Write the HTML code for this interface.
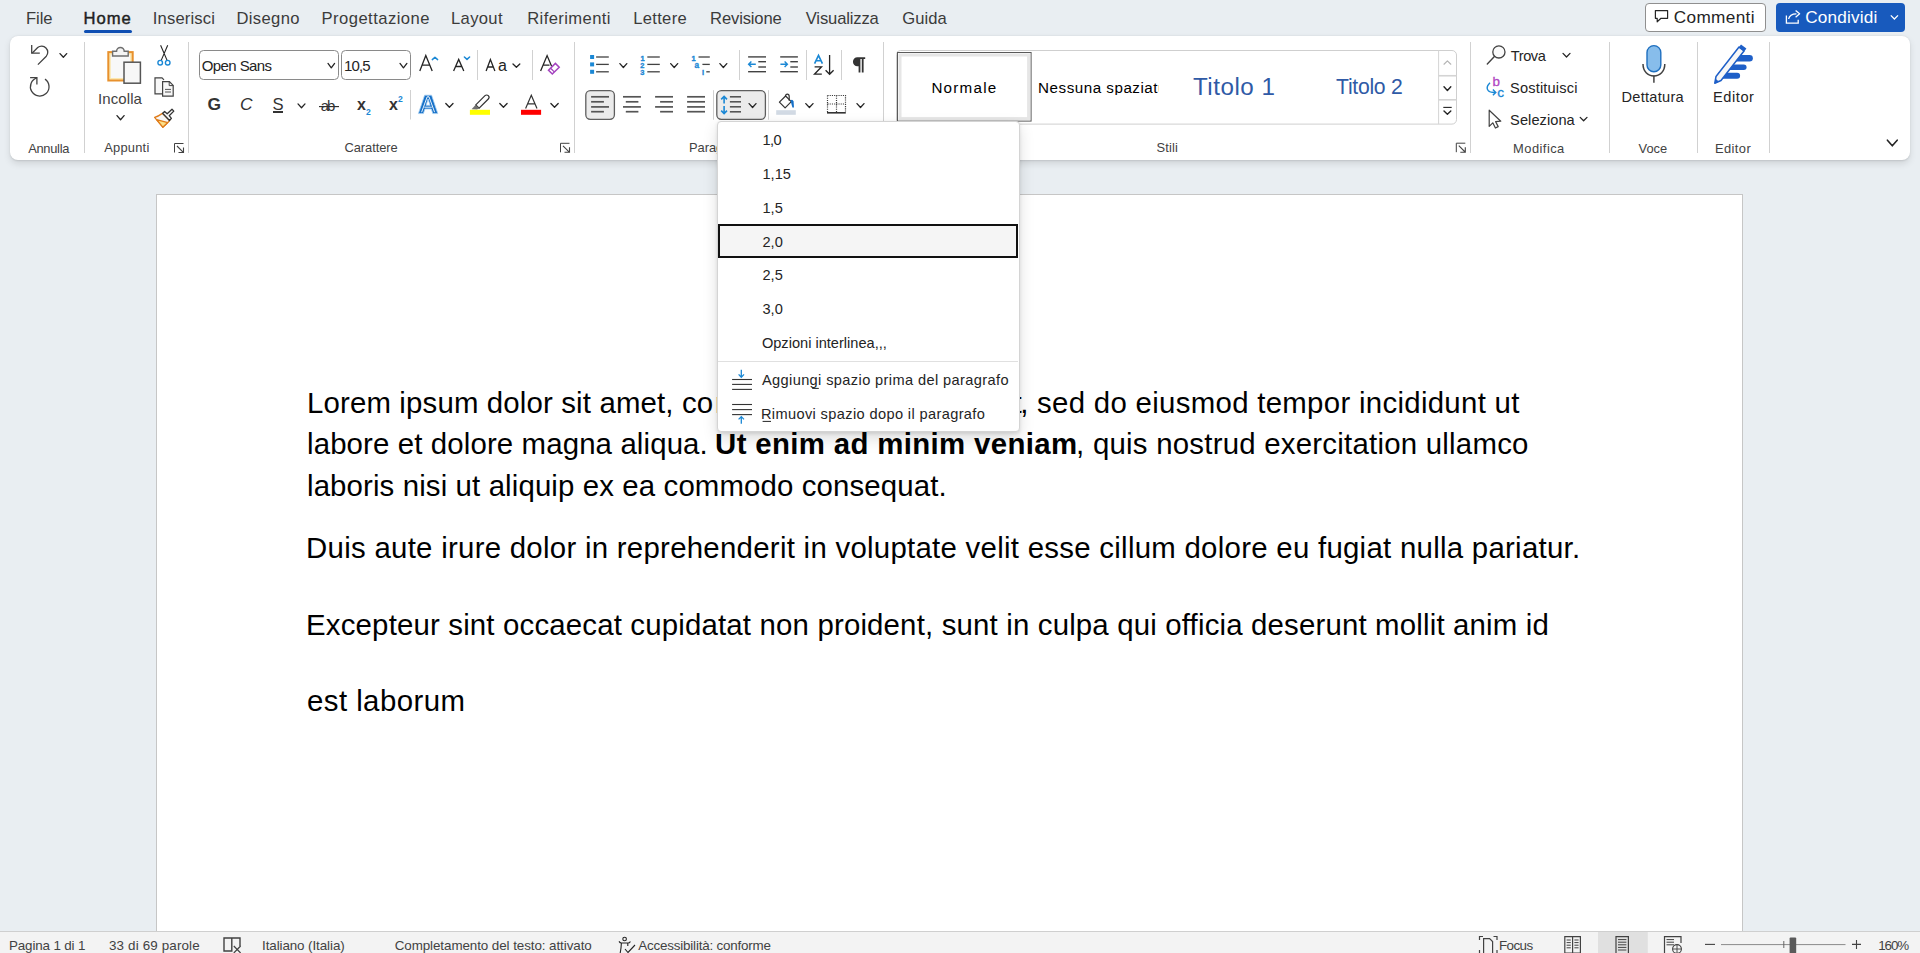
<!DOCTYPE html>
<html><head><meta charset="utf-8"><title>Word</title>
<style>
html,body{margin:0;padding:0;}
body{width:1920px;height:953px;overflow:hidden;position:relative;background:#e9eef2;font-family:"Liberation Sans",sans-serif;}
.t{position:absolute;white-space:nowrap;line-height:1;}
.r{position:absolute;box-sizing:border-box;}
svg{position:absolute;overflow:visible;}
</style></head><body>
<div class="t" id="t0" style="left:26.00px;top:10.85px;font-size:16.6px;color:#3b3b3b;letter-spacing:-0.086px;">File</div>
<div class="t" id="t1" style="left:83.50px;top:10.85px;font-size:16.6px;color:#1f1f1f;letter-spacing:0.988px;-webkit-text-stroke:0.45px #1f1f1f;">Home</div>
<div class="t" id="t2" style="left:152.75px;top:10.85px;font-size:16.6px;color:#3b3b3b;letter-spacing:0.166px;">Inserisci</div>
<div class="t" id="t3" style="left:236.50px;top:10.85px;font-size:16.6px;color:#3b3b3b;letter-spacing:0.350px;">Disegno</div>
<div class="t" id="t4" style="left:321.50px;top:10.85px;font-size:16.6px;color:#3b3b3b;letter-spacing:0.465px;">Progettazione</div>
<div class="t" id="t5" style="left:451.00px;top:10.85px;font-size:16.6px;color:#3b3b3b;letter-spacing:0.338px;">Layout</div>
<div class="t" id="t6" style="left:527.20px;top:10.85px;font-size:16.6px;color:#3b3b3b;letter-spacing:0.399px;">Riferimenti</div>
<div class="t" id="t7" style="left:633.20px;top:10.85px;font-size:16.6px;color:#3b3b3b;letter-spacing:0.311px;">Lettere</div>
<div class="t" id="t8" style="left:710.10px;top:10.85px;font-size:16.6px;color:#3b3b3b;letter-spacing:-0.155px;">Revisione</div>
<div class="t" id="t9" style="left:805.75px;top:10.85px;font-size:16.6px;color:#3b3b3b;letter-spacing:-0.147px;">Visualizza</div>
<div class="t" id="t10" style="left:902.20px;top:10.85px;font-size:16.6px;color:#3b3b3b;letter-spacing:0.087px;">Guida</div>
<div class="r" style="left:84px;top:30px;width:48px;height:3px;background:#0f4fb3;border-radius:2px;"></div>
<div class="r" style="left:1644.5px;top:2.5px;width:121.0px;height:29.0px;background:#fff;border:1px solid #8f8f8f;border-radius:4px;"></div>
<div class="t" id="t11" style="left:1673.80px;top:9.44px;font-size:17.2px;color:#242424;letter-spacing:0.343px;">Commenti</div>
<div class="r" style="left:1776px;top:2.5px;width:129px;height:29.0px;background:#185abd;border-radius:4px;"></div>
<div class="t" id="t12" style="left:1805.20px;top:9.44px;font-size:17.2px;color:#ffffff;letter-spacing:0.178px;">Condividi</div>
<div class="r" style="left:10px;top:36px;width:1900px;height:124px;background:#fff;border-radius:8px;box-shadow:0 3.2px 7.2px rgba(0,0,0,0.10),0 0.6px 1.8px rgba(0,0,0,0.10);"></div>
<svg style="left:0px;top:0px;" width="1920" height="953" viewBox="0 0 1920 953"><line x1="84.5" y1="42" x2="84.5" y2="153" stroke="#d1d1d1" stroke-width="1"/><line x1="188.5" y1="42" x2="188.5" y2="153" stroke="#d1d1d1" stroke-width="1"/><line x1="574.5" y1="42" x2="574.5" y2="153" stroke="#d1d1d1" stroke-width="1"/><line x1="883.5" y1="42" x2="883.5" y2="153" stroke="#d1d1d1" stroke-width="1"/><line x1="1470.5" y1="42" x2="1470.5" y2="153" stroke="#d1d1d1" stroke-width="1"/><line x1="1609.5" y1="42" x2="1609.5" y2="153" stroke="#d1d1d1" stroke-width="1"/><line x1="1697.5" y1="42" x2="1697.5" y2="153" stroke="#d1d1d1" stroke-width="1"/><line x1="1769.5" y1="42" x2="1769.5" y2="153" stroke="#d1d1d1" stroke-width="1"/></svg>
<div class="t" id="t13" style="left:28.20px;top:143.08px;font-size:12.9px;color:#424242;letter-spacing:-0.306px;">Annulla</div>
<div class="t" id="t14" style="left:104.20px;top:142.08px;font-size:12.9px;color:#424242;letter-spacing:0.224px;">Appunti</div>
<div class="t" id="t15" style="left:344.40px;top:142.08px;font-size:12.9px;color:#424242;letter-spacing:-0.046px;">Carattere</div>
<div class="t" id="t16" style="left:688.90px;top:142.08px;font-size:12.9px;color:#424242;">Paragrafo</div>
<div class="t" id="t17" style="left:1156.40px;top:142.08px;font-size:12.9px;color:#424242;letter-spacing:0.173px;">Stili</div>
<div class="t" id="t18" style="left:1513.10px;top:143.08px;font-size:12.9px;color:#424242;letter-spacing:0.453px;">Modifica</div>
<div class="t" id="t19" style="left:1638.60px;top:143.08px;font-size:12.9px;color:#424242;letter-spacing:-0.067px;">Voce</div>
<div class="t" id="t20" style="left:1714.90px;top:143.08px;font-size:12.9px;color:#424242;letter-spacing:0.424px;">Editor</div>
<svg style="left:0px;top:0px;" width="1920" height="953" viewBox="0 0 1920 953"><path d="M37.9,64.6 L46.3,56.2 A6.1,6.1 0 0 0 37.7,47.6 L32.3,53" fill="none" stroke="#424242" stroke-width="1.3"/><path d="M31.7,45 V53.2 H39.8" fill="none" stroke="#424242" stroke-width="1.3"/><polyline points="60,53.6 63.35,57.3 66.7,53.6" fill="none" stroke="#242424" stroke-width="1.3" stroke-linecap="round" stroke-linejoin="round"/><path d="M36.9,77.9 A9.3,9.3 0 1 0 45.0,79.1" fill="none" stroke="#424242" stroke-width="1.3"/><path d="M30.1,77.6 H36.9 V84.4" fill="none" stroke="#424242" stroke-width="1.3"/><rect x="108.3" y="52.1" width="24.4" height="28.4" fill="#fbe7b0" stroke="#e8912d" stroke-width="2"/><rect x="110.8" y="54.6" width="19.4" height="23.4" fill="#f8f8f8"/><path d="M112.6,56 V51.3 H116.6 A3.8,3.8 0 0 1 124.2,51.3 H128.2 V56 Z" fill="#f4f4f4" stroke="#6e6e6e" stroke-width="1.4"/><rect x="124.0" y="62.2" width="16.4" height="21" fill="#f7f7f7" stroke="#555" stroke-width="1.5"/><polyline points="117,115.6 120.55,119.7 124.1,115.6" fill="none" stroke="#242424" stroke-width="1.3" stroke-linecap="round" stroke-linejoin="round"/><path d="M160.6,45.2 L167.1,60.4 M167.7,45.2 L161.2,60.4" stroke="#242424" stroke-width="1.1" fill="none"/><circle cx="160.2" cy="62.7" r="2.3" fill="#fff" stroke="#1b88d5" stroke-width="1.4"/><circle cx="167.7" cy="62.7" r="2.3" fill="#fff" stroke="#1b88d5" stroke-width="1.4"/><path d="M163,93.8 H155 V77.8 H162 L164,79.8" fill="#f7f7f7" stroke="#424242" stroke-width="1.2"/><path d="M162.6,81.6 H169.4 L173.2,85.4 V96.2 H162.6 Z" fill="#f7f7f7" stroke="#424242" stroke-width="1.2"/><path d="M169.2,81.6 V85.6 H173.2" fill="none" stroke="#424242" stroke-width="1"/><path d="M165,89.4 H171 M165,92 H171" stroke="#424242" stroke-width="0.9"/><path d="M162.4,113.4 Q158,116.6 154.6,117.3 L162.8,127.2 Q166.6,124 169.6,120.6 Z" fill="#f7f7f7" stroke="#e07c1a" stroke-width="1.3" stroke-linejoin="round"/><path d="M156.6,119.6 L167.8,122.6 L162.8,127.2 Z" fill="#fbe08a" stroke="#e07c1a" stroke-width="1.3" stroke-linejoin="round"/><path d="M162.6,113.2 L164.6,111.5 L167.2,113.8 L172,109.3 L173.8,111.1 L169.2,115.7 L171.4,118.3 L169.5,120.5 Z" fill="#f7f7f7" stroke="#333" stroke-width="1.3" stroke-linejoin="round"/><rect x="199.5" y="50.5" width="139" height="29" rx="4" fill="#fff" stroke="#8a8a8a" stroke-width="1"/><rect x="341.5" y="50.5" width="69" height="29" rx="4" fill="#fff" stroke="#8a8a8a" stroke-width="1"/><polyline points="328,63.4 331.3,67.8 334.6,63.4" fill="none" stroke="#242424" stroke-width="1.3" stroke-linecap="round" stroke-linejoin="round"/><polyline points="400,63.4 403.45,67.8 406.9,63.4" fill="none" stroke="#242424" stroke-width="1.3" stroke-linecap="round" stroke-linejoin="round"/><path d="M419.8,71 L425.8,55.6 L432.2,71 M422.1,65.1 H429.6" fill="none" stroke="#242424" stroke-width="1.3"/><polyline points="432.3,59.6 434.95000000000005,57.2 437.6,59.6" fill="none" stroke="#1b88d5" stroke-width="1.5" stroke-linecap="round" stroke-linejoin="round"/><path d="M453.6,71 L458.7,59.4 L463.8,71 M455.5,66.5 H462" fill="none" stroke="#242424" stroke-width="1.3"/><polyline points="464.4,57 467.0,59.4 469.6,57" fill="none" stroke="#1b88d5" stroke-width="1.5" stroke-linecap="round" stroke-linejoin="round"/><line x1="477.5" y1="50" x2="477.5" y2="80" stroke="#d1d1d1" stroke-width="1" stroke-linecap="butt"/><path d="M486.1,71 L490.4,59.5 L494.9,71 M487.6,67 H493.3" fill="none" stroke="#242424" stroke-width="1.3"/><polyline points="513,64 516.4,67.3 519.8,64" fill="none" stroke="#242424" stroke-width="1.3" stroke-linecap="round" stroke-linejoin="round"/><line x1="532.5" y1="50" x2="532.5" y2="80" stroke="#d1d1d1" stroke-width="1" stroke-linecap="butt"/><path d="M540.6,71 L547.1,55.6 L551.6,66.2 M543,65.2 H549.5" fill="none" stroke="#242424" stroke-width="1.3"/><path d="M548.5,70.2 L555.4,63.4 L559.2,67.2 L552.3,74 Z" fill="#fff" stroke="#a443bf" stroke-width="1.5" stroke-linejoin="miter"/><path d="M550.6,68.2 L554.3,71.9" stroke="#a443bf" stroke-width="1.3"/><polyline points="298,103.9 301.5,107.7 305,103.9" fill="none" stroke="#242424" stroke-width="1.3" stroke-linecap="round" stroke-linejoin="round"/><line x1="319" y1="106.6" x2="339" y2="106.6" stroke="#242424" stroke-width="1.1" stroke-linecap="butt"/><line x1="410.5" y1="90" x2="410.5" y2="119.5" stroke="#d1d1d1" stroke-width="1" stroke-linecap="butt"/><path d="M418.4,113.6 L424.6,95.2 L431.6,95.2 L437.8,113.6 L432.8,113.6 L431.3,109 L424.9,109 L423.4,113.6 Z M426.1,105.3 L430.1,105.3 L428.1,99 Z" fill="#1570c8" fill-rule="evenodd" stroke="#a9d0f2" stroke-width="0.8" stroke-linejoin="round"/><path d="M421.6,112.2 L427.2,96.8 L429.0,96.8 L434.6,112.2 M424.4,107.2 H431.8" fill="none" stroke="#fff" stroke-width="0.9"/><polyline points="445.8,103.5 449.4,107.3 453,103.5" fill="none" stroke="#242424" stroke-width="1.3" stroke-linecap="round" stroke-linejoin="round"/><path d="M475.8,104.9 L485.0,95.7 A2.3,2.3 0 0 1 488.3,99 L479.1,108.2 Z" fill="#fff" stroke="#333" stroke-width="1.2"/><path d="M475.6,104.7 L479.3,108.4 L476.9,109.4 L471.6,109.2 Z" fill="#707070"/><rect x="469.9" y="109.8" width="20.1" height="5" fill="#ffff00"/><polyline points="499.8,103.5 503.45000000000005,107.3 507.1,103.5" fill="none" stroke="#242424" stroke-width="1.3" stroke-linecap="round" stroke-linejoin="round"/><path d="M525.6,108.6 L531.3,95.3 L537,108.6 M527.6,103.8 H535" fill="none" stroke="#333" stroke-width="1.2"/><rect x="521" y="109.8" width="20.1" height="5" fill="#ff0000"/><polyline points="550.9,103.5 554.55,107.3 558.2,103.5" fill="none" stroke="#242424" stroke-width="1.3" stroke-linecap="round" stroke-linejoin="round"/><rect x="590.1" y="55" width="4" height="4" fill="#1b88d5"/><line x1="596.1" y1="57" x2="608.8" y2="57" stroke="#424242" stroke-width="1.3" stroke-linecap="butt"/><line x1="647.3" y1="57" x2="659.8" y2="57" stroke="#424242" stroke-width="1.3" stroke-linecap="butt"/><rect x="590.1" y="62.400000000000006" width="4" height="4" fill="#1b88d5"/><line x1="596.1" y1="64.4" x2="608.8" y2="64.4" stroke="#424242" stroke-width="1.3" stroke-linecap="butt"/><line x1="647.3" y1="64.4" x2="659.8" y2="64.4" stroke="#424242" stroke-width="1.3" stroke-linecap="butt"/><rect x="590.1" y="69.8" width="4" height="4" fill="#1b88d5"/><line x1="596.1" y1="71.8" x2="608.8" y2="71.8" stroke="#424242" stroke-width="1.3" stroke-linecap="butt"/><line x1="647.3" y1="71.8" x2="659.8" y2="71.8" stroke="#424242" stroke-width="1.3" stroke-linecap="butt"/><polyline points="619.9,63.6 623.3499999999999,67.5 626.8,63.6" fill="none" stroke="#242424" stroke-width="1.3" stroke-linecap="round" stroke-linejoin="round"/><polyline points="670.7,63.6 674.2,67.5 677.7,63.6" fill="none" stroke="#242424" stroke-width="1.3" stroke-linecap="round" stroke-linejoin="round"/><polyline points="719.9,63.6 723.3499999999999,67.5 726.8,63.6" fill="none" stroke="#242424" stroke-width="1.3" stroke-linecap="round" stroke-linejoin="round"/><text x="640.4" y="60.6" font-size="7.4" font-weight="700" fill="#1b88d5" stroke="#1b88d5" stroke-width="0.35" font-family="Liberation Sans">1</text><text x="640.2" y="67.9" font-size="7.4" font-weight="700" fill="#1b88d5" stroke="#1b88d5" stroke-width="0.35" font-family="Liberation Sans">2</text><text x="640.2" y="75.2" font-size="7.4" font-weight="700" fill="#1b88d5" stroke="#1b88d5" stroke-width="0.35" font-family="Liberation Sans">3</text><text x="691.6" y="60.6" font-size="7.4" font-weight="700" fill="#1b88d5" stroke="#1b88d5" stroke-width="0.35" font-family="Liberation Sans">1</text><text x="694.4" y="67.9" font-size="8.2" font-weight="700" fill="#1b88d5" stroke="#1b88d5" stroke-width="0.35" font-family="Liberation Sans">a</text><text x="701.9" y="75.2" font-size="7.4" font-weight="700" fill="#1b88d5" stroke="#1b88d5" stroke-width="0.35" font-family="Liberation Sans">i</text><line x1="698.5" y1="57" x2="709.8" y2="57" stroke="#424242" stroke-width="1.3" stroke-linecap="butt"/><line x1="702.4" y1="64.4" x2="709.8" y2="64.4" stroke="#424242" stroke-width="1.3" stroke-linecap="butt"/><line x1="706.3" y1="71.8" x2="709.8" y2="71.8" stroke="#424242" stroke-width="1.3" stroke-linecap="butt"/><line x1="739.5" y1="50" x2="739.5" y2="80" stroke="#d1d1d1" stroke-width="1" stroke-linecap="butt"/><line x1="748.1" y1="56.9" x2="766" y2="56.9" stroke="#424242" stroke-width="1.4" stroke-linecap="butt"/><line x1="758.3" y1="61.7" x2="766" y2="61.7" stroke="#424242" stroke-width="1.4" stroke-linecap="butt"/><line x1="758.3" y1="67" x2="766" y2="67" stroke="#424242" stroke-width="1.4" stroke-linecap="butt"/><line x1="748.1" y1="71.7" x2="766" y2="71.7" stroke="#424242" stroke-width="1.4" stroke-linecap="butt"/><line x1="780.2" y1="56.9" x2="797.9" y2="56.9" stroke="#424242" stroke-width="1.4" stroke-linecap="butt"/><line x1="790.3" y1="61.7" x2="797.9" y2="61.7" stroke="#424242" stroke-width="1.4" stroke-linecap="butt"/><line x1="790.3" y1="67" x2="797.9" y2="67" stroke="#424242" stroke-width="1.4" stroke-linecap="butt"/><line x1="780.2" y1="71.7" x2="797.9" y2="71.7" stroke="#424242" stroke-width="1.4" stroke-linecap="butt"/><path d="M755.8,64.2 H748.8 M751.4,61.4 L748.6,64.2 L751.4,67" fill="none" stroke="#1b88d5" stroke-width="1.4"/><path d="M780.4,64.2 H787.2 M784.6,61.4 L787.4,64.2 L784.6,67" fill="none" stroke="#1b88d5" stroke-width="1.4"/><line x1="806.5" y1="50" x2="806.5" y2="80" stroke="#d1d1d1" stroke-width="1" stroke-linecap="butt"/><path d="M814.6,63.7 L818.5,55.3 L822.4,63.7 M816,60.7 H821" fill="none" stroke="#1b88d5" stroke-width="1.6"/><path d="M814.6,66.9 H821.4 L814.6,74.1 H821.8" fill="none" stroke="#242424" stroke-width="1.4"/><path d="M829.6,55.1 V74.3 M825.6,70.2 L829.6,74.3 L833.6,70.2" fill="none" stroke="#242424" stroke-width="1.3"/><line x1="841.5" y1="50" x2="841.5" y2="80" stroke="#d1d1d1" stroke-width="1" stroke-linecap="butt"/><path d="M865.2,57.3 V59 H863.6 V72.4 H861.8 V59 H860.4 V72.4 H858.6 V66.2 H857.4 A4.45,4.45 0 0 1 857.4,57.3 Z" fill="#333"/><rect x="585.8" y="90.7" width="28.6" height="28.6" rx="4.5" fill="#ebebeb" stroke="#5e5e5e" stroke-width="1.3"/><line x1="591.1" y1="96.8" x2="609" y2="96.8" stroke="#555" stroke-width="1.7" stroke-linecap="butt"/><line x1="623" y1="96.8" x2="640.9" y2="96.8" stroke="#555" stroke-width="1.7" stroke-linecap="butt"/><line x1="655.1" y1="96.8" x2="673" y2="96.8" stroke="#555" stroke-width="1.7" stroke-linecap="butt"/><line x1="687.1" y1="96.8" x2="705" y2="96.8" stroke="#555" stroke-width="1.7" stroke-linecap="butt"/><line x1="591.1" y1="101.8" x2="603.9" y2="101.8" stroke="#555" stroke-width="1.7" stroke-linecap="butt"/><line x1="625.8" y1="101.8" x2="638.4" y2="101.8" stroke="#555" stroke-width="1.7" stroke-linecap="butt"/><line x1="660.1" y1="101.8" x2="673" y2="101.8" stroke="#555" stroke-width="1.7" stroke-linecap="butt"/><line x1="687.1" y1="101.8" x2="705" y2="101.8" stroke="#555" stroke-width="1.7" stroke-linecap="butt"/><line x1="591.1" y1="106.9" x2="609" y2="106.9" stroke="#555" stroke-width="1.7" stroke-linecap="butt"/><line x1="623" y1="106.9" x2="640.9" y2="106.9" stroke="#555" stroke-width="1.7" stroke-linecap="butt"/><line x1="655.1" y1="106.9" x2="673" y2="106.9" stroke="#555" stroke-width="1.7" stroke-linecap="butt"/><line x1="687.1" y1="106.9" x2="705" y2="106.9" stroke="#555" stroke-width="1.7" stroke-linecap="butt"/><line x1="591.1" y1="111.7" x2="603.9" y2="111.7" stroke="#555" stroke-width="1.7" stroke-linecap="butt"/><line x1="625.8" y1="111.7" x2="638.4" y2="111.7" stroke="#555" stroke-width="1.7" stroke-linecap="butt"/><line x1="660.1" y1="111.7" x2="673" y2="111.7" stroke="#555" stroke-width="1.7" stroke-linecap="butt"/><line x1="687.1" y1="111.7" x2="705" y2="111.7" stroke="#555" stroke-width="1.7" stroke-linecap="butt"/><line x1="713.5" y1="90.2" x2="713.5" y2="119.7" stroke="#d1d1d1" stroke-width="1" stroke-linecap="butt"/><rect x="716.8" y="90.7" width="48.6" height="28.6" rx="4.5" fill="#ebebeb" stroke="#5e5e5e" stroke-width="1.3"/><line x1="729.9" y1="96.8" x2="741" y2="96.8" stroke="#555" stroke-width="1.6" stroke-linecap="butt"/><line x1="729.9" y1="101.8" x2="741" y2="101.8" stroke="#555" stroke-width="1.6" stroke-linecap="butt"/><line x1="729.9" y1="106.8" x2="741" y2="106.8" stroke="#555" stroke-width="1.6" stroke-linecap="butt"/><line x1="729.9" y1="111.8" x2="741" y2="111.8" stroke="#555" stroke-width="1.6" stroke-linecap="butt"/><path d="M724.1,96.6 V103.6 M721.2,99.4 L724.1,96.5 L727,99.4 M724.1,106 V113.4 M721.2,110.6 L724.1,113.5 L727,110.6" fill="none" stroke="#1b88d5" stroke-width="1.6"/><polyline points="749.1,103.6 752.55,107.5 756,103.6" fill="none" stroke="#242424" stroke-width="1.3" stroke-linecap="round" stroke-linejoin="round"/><line x1="768.5" y1="90.2" x2="768.5" y2="119.7" stroke="#d1d1d1" stroke-width="1" stroke-linecap="butt"/><path d="M779.4,102.2 L785.6,96 L791.3,101.7 L785.1,107.9 Z" fill="#fff" stroke="#333" stroke-width="1.2" stroke-linejoin="round"/><path d="M785.4,96.4 C785.4,93.4 789.2,93.4 789.2,96.6 V100.8" fill="none" stroke="#333" stroke-width="1.2"/><path d="M790.5,100.5 Q792.6,98.8 793.6,101.6 L794,107.6 L792.4,107.4 Z" fill="#1570c8"/><rect x="776.2" y="110.2" width="19.6" height="4.6" fill="#d2dae4"/><polyline points="805.8,103.6 809.4,107.5 813,103.6" fill="none" stroke="#242424" stroke-width="1.3" stroke-linecap="round" stroke-linejoin="round"/><path d="M827.5,95.5 H845.5 V112.5 M827.5,95.5 V112.5 M836.5,95.5 V112.5 M827.5,104 H845.5" fill="none" stroke="#3a3a3a" stroke-width="1.2" stroke-dasharray="1.1,1.1"/><line x1="827" y1="112.8" x2="845.8" y2="112.8" stroke="#333" stroke-width="1.6" stroke-linecap="butt"/><polyline points="857,103.6 860.5,107.5 864,103.6" fill="none" stroke="#242424" stroke-width="1.3" stroke-linecap="round" stroke-linejoin="round"/><path d="M900.5,50.5 H1452 A4.5,4.5 0 0 1 1456.5,55 V119.6 A4.5,4.5 0 0 1 1452,124.1 H900.5 A4,4 0 0 1 896.5,120.1 V54.5 A4,4 0 0 1 900.5,50.5 Z" fill="#fff" stroke="#cfcfcf" stroke-width="1"/><rect x="897.5" y="52.5" width="133.6" height="68.6" fill="#fff" stroke="#5a5a5a" stroke-width="1"/><rect x="900" y="55" width="128.6" height="63.6" fill="none" stroke="#e6e6e6" stroke-width="3"/><line x1="1438.6" y1="50.5" x2="1438.6" y2="124.1" stroke="#d4d4d4" stroke-width="1" stroke-linecap="butt"/><line x1="1438.6" y1="75.75" x2="1456.4" y2="75.75" stroke="#d4d4d4" stroke-width="1.6" stroke-linecap="butt"/><line x1="1438.6" y1="99.8" x2="1456.4" y2="99.8" stroke="#d4d4d4" stroke-width="1.6" stroke-linecap="butt"/><polyline points="1444,64.2 1447.4,60.9 1450.8,64.2" fill="none" stroke="#b5b5b5" stroke-width="1.2" stroke-linecap="round" stroke-linejoin="round"/><polyline points="1444,86.8 1447.4,90.4 1450.8,86.8" fill="none" stroke="#242424" stroke-width="1.4" stroke-linecap="round" stroke-linejoin="round"/><line x1="1443.3" y1="107.4" x2="1451.7" y2="107.4" stroke="#242424" stroke-width="1.1" stroke-linecap="butt"/><polyline points="1444,110.9 1447.4,114.2 1450.8,110.9" fill="none" stroke="#242424" stroke-width="1.4" stroke-linecap="round" stroke-linejoin="round"/><path d="M174.5,152.5 V143.5 H183.5" fill="none" stroke="#424242" stroke-width="1"/><path d="M177,146 L183.3,152.3 M183.5,147.5 V152.5 H178.5" fill="none" stroke="#424242" stroke-width="1.1"/><path d="M560.5,152.3 V143.3 H569.5" fill="none" stroke="#424242" stroke-width="1"/><path d="M563,145.8 L569.3,152.10000000000002 M569.5,147.3 V152.3 H564.5" fill="none" stroke="#424242" stroke-width="1.1"/><path d="M1456.3,152.2 V143.2 H1465.3" fill="none" stroke="#424242" stroke-width="1"/><path d="M1458.8,145.7 L1465.1,152.0 M1465.3,147.2 V152.2 H1460.3" fill="none" stroke="#424242" stroke-width="1.1"/><circle cx="1498.9" cy="51.9" r="6.1" fill="#fafafa" stroke="#424242" stroke-width="1.3"/><line x1="1494.4" y1="56.6" x2="1487.3" y2="63.9" stroke="#424242" stroke-width="1.4" stroke-linecap="round"/><polyline points="1563,53.4 1566.5,57 1570,53.4" fill="none" stroke="#242424" stroke-width="1.3" stroke-linecap="round" stroke-linejoin="round"/><text x="1492.4" y="86.4" font-size="13.4" fill="#b146c2" stroke="#b146c2" stroke-width="0.3" font-family="Liberation Sans">b</text><text x="1497.2" y="96.8" font-size="13.6" fill="#1b88d5" stroke="#1b88d5" stroke-width="0.3" font-family="Liberation Sans">c</text><path d="M1490.0,82.8 Q1485.4,87.4 1488.2,90.6 Q1490.2,92.8 1495.8,92.4 M1492.9,89.6 L1495.8,92.4 L1492.9,95.2" fill="none" stroke="#1b88d5" stroke-width="1.4"/><path d="M1489.2,110.2 L1500.8,121.2 L1495.6,121.6 L1498.2,126.6 L1495.4,128 L1492.8,122.8 L1489.2,126.4 Z" fill="#fff" stroke="#424242" stroke-width="1.2" stroke-linejoin="round"/><polyline points="1580.2,117.4 1583.6,120.8 1587,117.4" fill="none" stroke="#242424" stroke-width="1.3" stroke-linecap="round" stroke-linejoin="round"/><rect x="1647" y="45.6" width="13.8" height="26.2" rx="6.9" fill="#87bdeb" stroke="#1e6fbf" stroke-width="1.4"/><path d="M1643,64 C1643,71.4 1647.8,76 1653.9,76 C1660,76 1664.8,71.4 1664.8,64" fill="none" stroke="#424242" stroke-width="1.5"/><line x1="1653.9" y1="75.5" x2="1653.9" y2="82.7" stroke="#424242" stroke-width="1.5" stroke-linecap="butt"/><path d="M1732,55 H1749.6 A3.25,3.25 0 0 1 1749.6,61.5 H1732 Z" fill="#1e5fc8"/><path d="M1725,64.4 H1743.8 A2.75,2.75 0 0 1 1743.8,69.9 H1725 Z" fill="#1e5fc8"/><path d="M1718,72.8 H1737.1 A3,3 0 0 1 1737.1,78.8 H1718 Z" fill="#1e5fc8"/><path d="M1714.8,83.2 L1716.0,76.5 L1739.0,47.0 L1744.0,51.0 L1721.0,80.5 Z" fill="#f7f7f7" stroke="#1e5fc8" stroke-width="1.5" stroke-linejoin="round"/><path d="M1738.6,47.4 L1741.0,44.4 L1746.4,48.6 L1744.2,51.4 Z" fill="#1e5fc8"/><path d="M1714.6,83.4 L1715.4,78.6 L1718.8,81.4 Z" fill="#1e5fc8"/><polyline points="1887.4,140.2 1892.3000000000002,145.8 1897.2,140.2" fill="none" stroke="#242424" stroke-width="1.6" stroke-linecap="round" stroke-linejoin="round"/></svg>
<svg style="left:0px;top:0px;" width="1920" height="953" viewBox="0 0 1920 953"><path d="M1655.4,10.6 H1667.6 V18.3 H1661 L1657.2,21.8 V18.3 H1655.4 Z" fill="none" stroke="#242424" stroke-width="1.2" stroke-linejoin="round"/><path d="M1786.4,15.4 V23.2 H1798.2 V19.8" fill="none" stroke="#fff" stroke-width="1.3"/><path d="M1788.6,19 Q1789.6,13.8 1796.4,13.8 M1795.6,10.4 L1799.6,13.8 L1795.6,17.2" fill="none" stroke="#fff" stroke-width="1.3" stroke-linejoin="round"/><polyline points="1890.8,15.4 1894.4,19 1898,15.4" fill="none" stroke="#fff" stroke-width="1.3"/></svg>
<div class="t" id="t21" style="left:98.10px;top:91.00px;font-size:15px;color:#424242;letter-spacing:0.080px;">Incolla</div>
<div class="t" id="t22" style="left:201.80px;top:58.20px;font-size:15px;color:#242424;letter-spacing:-0.606px;">Open Sans</div>
<div class="t" id="t23" style="left:344.00px;top:58.20px;font-size:15px;color:#242424;letter-spacing:-0.884px;">10,5</div>
<div class="t" id="t24" style="left:497.90px;top:58.46px;font-size:16px;color:#242424;">a</div>
<div class="t" id="t25" style="left:207.60px;top:95.97px;font-size:17.4px;color:#333;font-weight:700;">G</div>
<div class="t" id="t26" style="left:240.10px;top:95.97px;font-size:17.4px;color:#333;font-style:italic;">C</div>
<div class="t" id="t27" style="left:272.50px;top:96.65px;font-size:16.6px;color:#333;">S</div>
<div class="r" style="left:273.1px;top:111.2px;width:9.9px;height:1.5px;background:#333"></div>
<div class="t" id="t28" style="left:320.70px;top:98.30px;font-size:15px;color:#333;letter-spacing:-2.042px;">ab</div>
<div class="t" id="t29" style="left:357.00px;top:97.36px;font-size:16px;color:#333;font-weight:700;">x</div>
<div class="t" id="t30" style="left:366.00px;top:107.52px;font-size:8.6px;color:#1b88d5;font-weight:700;">2</div>
<div class="t" id="t31" style="left:389.00px;top:97.36px;font-size:16px;color:#333;font-weight:700;">x</div>
<div class="t" id="t32" style="left:398.00px;top:95.42px;font-size:8.6px;color:#1b88d5;font-weight:700;">2</div>
<div class="t" id="t33" style="left:931.40px;top:80.13px;font-size:15.2px;color:#000;letter-spacing:1.243px;">Normale</div>
<div class="t" id="t34" style="left:1038.10px;top:80.13px;font-size:15.2px;color:#000;letter-spacing:0.508px;width:120.9px;overflow:hidden;">Nessuna spaziatu</div>
<div class="t" id="t35" style="left:1192.90px;top:74.71px;font-size:24.2px;color:#2f5aa6;letter-spacing:0.533px;">Titolo 1</div>
<div class="t" id="t36" style="left:1336.10px;top:76.35px;font-size:21.2px;color:#2f5aa6;letter-spacing:-0.301px;">Titolo 2</div>
<div class="t" id="t37" style="left:1510.75px;top:48.74px;font-size:14.6px;color:#242424;letter-spacing:-0.411px;">Trova</div>
<div class="t" id="t38" style="left:1510.10px;top:80.84px;font-size:14.6px;color:#242424;letter-spacing:0.165px;">Sostituisci</div>
<div class="t" id="t39" style="left:1510.10px;top:113.34px;font-size:14.6px;color:#242424;letter-spacing:0.065px;">Seleziona</div>
<div class="t" id="t40" style="left:1621.50px;top:90.44px;font-size:14.6px;color:#242424;letter-spacing:0.274px;">Dettatura</div>
<div class="t" id="t41" style="left:1713.10px;top:90.44px;font-size:14.6px;color:#242424;letter-spacing:0.547px;">Editor</div>
<div class="r" style="left:156px;top:194px;width:1587px;height:806px;background:#fff;border:1px solid #c6c6c6;"></div>
<div class="t" id="t42" style="left:307.00px;top:388.31px;font-size:29.4px;color:#000;letter-spacing:0.149px;">Lorem ipsum dolor sit amet, co</div>
<div class="t" id="t43" style="left:715.00px;top:388.31px;font-size:29.4px;color:#000;letter-spacing:0.053px;">nsectetur adipiscing elit</div>
<div class="t" id="t44" style="left:1020.20px;top:388.31px;font-size:29.4px;color:#000;letter-spacing:0.297px;">, sed do eiusmod tempor incididunt ut</div>
<div class="t" id="t45" style="left:307.00px;top:428.51px;font-size:29.4px;color:#000;letter-spacing:0.128px;">labore et dolore magna aliqua.</div>
<div class="t" id="t46" style="left:715.10px;top:428.51px;font-size:29.4px;color:#000;font-weight:700;letter-spacing:0.342px;">Ut enim ad minim veniam</div>
<div class="t" id="t47" style="left:1076.10px;top:428.51px;font-size:29.4px;color:#000;letter-spacing:0.235px;">, quis nostrud exercitation ullamco</div>
<div class="t" id="t48" style="left:307.00px;top:471.31px;font-size:29.4px;color:#000;letter-spacing:0.123px;">laboris nisi ut aliquip ex ea commodo consequat.</div>
<div class="t" id="t49" style="left:306.10px;top:533.21px;font-size:29.4px;color:#000;letter-spacing:0.273px;">Duis aute irure dolor in reprehenderit in voluptate velit esse cillum dolore eu fugiat nulla pariatur.</div>
<div class="t" id="t50" style="left:306.10px;top:610.11px;font-size:29.4px;color:#000;letter-spacing:0.170px;">Excepteur sint occaecat cupidatat non proident, sunt in culpa qui officia deserunt mollit anim id</div>
<div class="t" id="t51" style="left:307.10px;top:685.61px;font-size:29.4px;color:#000;letter-spacing:0.423px;">est laborum</div>
<div class="r" style="left:0px;top:931px;width:1920px;height:22px;background:#f3f3f3;border-top:1px solid #cfcfcf;"></div>
<svg style="left:0px;top:0px;" width="1920" height="953" viewBox="0 0 1920 953"><path d="M224,951 V938 H231.8 V951 Z M231.8,938 H240 V946" fill="none" stroke="#424242" stroke-width="1.4"/><path d="M233.8,946 L240.6,953 M240.6,946 L233.8,953" stroke="#424242" stroke-width="1.2"/><circle cx="624.6" cy="939" r="1.8" fill="none" stroke="#222" stroke-width="1.1"/><path d="M619,941.4 Q620,943 621.4,943 H628 Q629.6,943 630.4,941.4 M621.4,943 Q621.2,948 620.2,953 M627.8,943 V946" fill="none" stroke="#222" stroke-width="1.1"/><path d="M625,949 L628,952.5 L635,945" fill="none" stroke="#222" stroke-width="1.1"/><path d="M1479.5,940 V936.5 H1483 M1493.5,936.5 H1497 V940 M1479.5,950 V953 M1497,950 V953" fill="none" stroke="#424242" stroke-width="1.2"/><path d="M1483.6,953 V938.6 H1489.6 L1492.6,941.6 V953" fill="none" stroke="#424242" stroke-width="1.2"/><path d="M1564.8,936.6 H1572.6 V953 H1564.8 Z M1572.6,936.6 H1580.4 V953 H1572.6" fill="none" stroke="#424242" stroke-width="1.2"/><line x1="1566.6" y1="940" x2="1570.8" y2="940" stroke="#424242" stroke-width="1" stroke-linecap="butt"/><line x1="1574.4" y1="940" x2="1578.6" y2="940" stroke="#424242" stroke-width="1" stroke-linecap="butt"/><line x1="1566.6" y1="942.6" x2="1570.8" y2="942.6" stroke="#424242" stroke-width="1" stroke-linecap="butt"/><line x1="1574.4" y1="942.6" x2="1578.6" y2="942.6" stroke="#424242" stroke-width="1" stroke-linecap="butt"/><line x1="1566.6" y1="945.2" x2="1570.8" y2="945.2" stroke="#424242" stroke-width="1" stroke-linecap="butt"/><line x1="1574.4" y1="945.2" x2="1578.6" y2="945.2" stroke="#424242" stroke-width="1" stroke-linecap="butt"/><line x1="1566.6" y1="947.8" x2="1570.8" y2="947.8" stroke="#424242" stroke-width="1" stroke-linecap="butt"/><line x1="1574.4" y1="947.8" x2="1578.6" y2="947.8" stroke="#424242" stroke-width="1" stroke-linecap="butt"/><rect x="1598" y="932" width="49.8" height="21" fill="#e0e0e0"/><path d="M1616,953 V936.6 H1628.4 V953" fill="none" stroke="#424242" stroke-width="1.2"/><line x1="1618" y1="939.6" x2="1626.4" y2="939.6" stroke="#424242" stroke-width="1" stroke-linecap="butt"/><line x1="1618" y1="942.2" x2="1626.4" y2="942.2" stroke="#424242" stroke-width="1" stroke-linecap="butt"/><line x1="1618" y1="944.8" x2="1626.4" y2="944.8" stroke="#424242" stroke-width="1" stroke-linecap="butt"/><line x1="1618" y1="947.4" x2="1626.4" y2="947.4" stroke="#424242" stroke-width="1" stroke-linecap="butt"/><line x1="1618" y1="950" x2="1626.4" y2="950" stroke="#424242" stroke-width="1" stroke-linecap="butt"/><path d="M1664.5,953 V936.6 H1681 V943" fill="none" stroke="#424242" stroke-width="1.2"/><line x1="1666.5" y1="939.6" x2="1674" y2="939.6" stroke="#424242" stroke-width="1" stroke-linecap="butt"/><line x1="1666.5" y1="942.2" x2="1674" y2="942.2" stroke="#424242" stroke-width="1" stroke-linecap="butt"/><line x1="1666.5" y1="944.8" x2="1674" y2="944.8" stroke="#424242" stroke-width="1" stroke-linecap="butt"/><circle cx="1677" cy="949" r="4.4" fill="#f3f3f3" stroke="#424242" stroke-width="1.1"/><path d="M1672.6,949 H1681.4 M1677,944.6 V953.4" stroke="#424242" stroke-width="0.9"/><line x1="1705" y1="944.4" x2="1715" y2="944.4" stroke="#424242" stroke-width="1.1" stroke-linecap="butt"/><line x1="1721" y1="944.6" x2="1845.5" y2="944.6" stroke="#8a8a8a" stroke-width="1" stroke-linecap="butt"/><line x1="1783.8" y1="941" x2="1783.8" y2="948" stroke="#666" stroke-width="1" stroke-linecap="butt"/><rect x="1789.6" y="937.6" width="6.6" height="16" fill="#5a5a5a" rx="1"/><path d="M1852,944.4 H1861 M1856.5,939.9 V948.9" stroke="#424242" stroke-width="1.1"/></svg>
<div class="t" id="t52" style="left:9.00px;top:938.56px;font-size:13.4px;color:#424242;letter-spacing:-0.144px;">Pagina 1 di 1</div>
<div class="t" id="t53" style="left:109.00px;top:938.56px;font-size:13.4px;color:#424242;letter-spacing:0.150px;">33 di 69 parole</div>
<div class="t" id="t54" style="left:262.00px;top:938.56px;font-size:13.4px;color:#424242;letter-spacing:-0.087px;">Italiano (Italia)</div>
<div class="t" id="t55" style="left:394.70px;top:938.56px;font-size:13.4px;color:#424242;letter-spacing:-0.076px;">Completamento del testo: attivato</div>
<div class="t" id="t56" style="left:638.30px;top:938.56px;font-size:13.4px;color:#424242;letter-spacing:-0.195px;">Accessibilità: conforme</div>
<div class="t" id="t57" style="left:1499.00px;top:938.56px;font-size:13.4px;color:#424242;letter-spacing:-0.567px;">Focus</div>
<div class="t" id="t58" style="left:1878.25px;top:938.56px;font-size:13.4px;color:#424242;letter-spacing:-1.114px;">160%</div>
<div class="r" style="left:716.5px;top:120.5px;width:303.0px;height:311.0px;background:#fff;border:1px solid #d4d4d4;border-radius:4px;box-shadow:0 6.4px 14.4px rgba(0,0,0,0.13),0 1.2px 3.6px rgba(0,0,0,0.10);"></div>
<div class="r" style="left:718px;top:224px;width:300px;height:34px;background:#f5f5f5;border:2px solid #111;"></div>
<div class="r" style="left:718px;top:361px;width:300px;height:1px;background:#e0e0e0;"></div>
<div class="t" id="t59" style="left:762.50px;top:132.54px;font-size:14.6px;color:#242424;letter-spacing:-0.635px;">1,0</div>
<div class="t" id="t60" style="left:762.50px;top:167.44px;font-size:14.6px;color:#242424;">1,15</div>
<div class="t" id="t61" style="left:762.50px;top:201.34px;font-size:14.6px;color:#242424;">1,5</div>
<div class="t" id="t62" style="left:762.50px;top:235.24px;font-size:14.6px;color:#242424;">2,0</div>
<div class="t" id="t63" style="left:762.50px;top:268.14px;font-size:14.6px;color:#242424;">2,5</div>
<div class="t" id="t64" style="left:762.50px;top:302.04px;font-size:14.6px;color:#242424;">3,0</div>
<div class="t" id="t65" style="left:761.90px;top:335.94px;font-size:14.6px;color:#242424;">Opzioni interlinea,,,</div>
<div class="t" id="t66" style="left:761.90px;top:372.74px;font-size:14.6px;color:#242424;letter-spacing:0.382px;">Aggiungi spazio prima del paragrafo</div>
<div class="t" id="t67" style="left:760.90px;top:406.74px;font-size:14.6px;color:#242424;letter-spacing:0.370px;">Rimuovi spazio dopo il paragrafo</div>
<svg style="left:0px;top:0px;" width="1920" height="953" viewBox="0 0 1920 953"><line x1="732.1" y1="379.5" x2="752" y2="379.5" stroke="#333" stroke-width="1.1" stroke-linecap="butt"/><line x1="732.1" y1="384.4" x2="752" y2="384.4" stroke="#333" stroke-width="1.1" stroke-linecap="butt"/><line x1="732.1" y1="389.4" x2="752" y2="389.4" stroke="#333" stroke-width="1.1" stroke-linecap="butt"/><path d="M741.3,369.8 V377 M738.6,374.4 L741.3,377.2 L744,374.4" fill="none" stroke="#1b88d5" stroke-width="1.3"/><line x1="732.1" y1="404.5" x2="752" y2="404.5" stroke="#333" stroke-width="1.1" stroke-linecap="butt"/><line x1="732.1" y1="409.6" x2="752" y2="409.6" stroke="#333" stroke-width="1.1" stroke-linecap="butt"/><line x1="732.1" y1="414.6" x2="752" y2="414.6" stroke="#333" stroke-width="1.1" stroke-linecap="butt"/><path d="M741.3,423.8 V416.8 M738.6,419.4 L741.3,416.6 L744,419.4" fill="none" stroke="#1b88d5" stroke-width="1.3"/><line x1="762.6" y1="421.4" x2="771" y2="421.4" stroke="#242424" stroke-width="1" stroke-linecap="butt"/><line x1="812.2" y1="388.4" x2="818.8" y2="388.4" stroke="#242424" stroke-width="1" stroke-linecap="butt"/></svg>
</body></html>
